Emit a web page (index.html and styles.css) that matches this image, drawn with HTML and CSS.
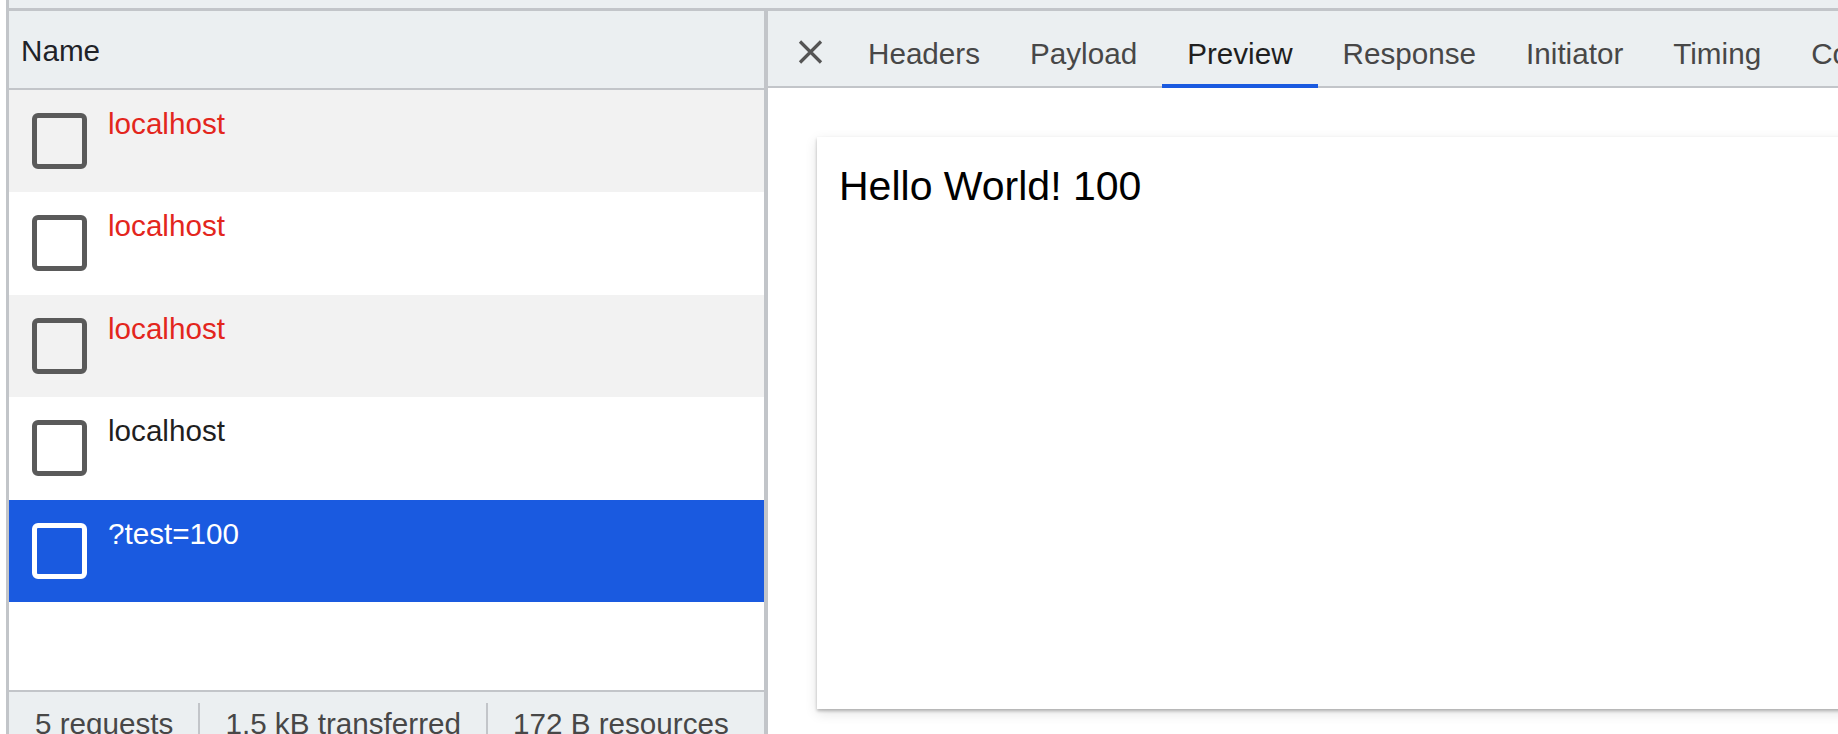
FILE: index.html
```html
<!DOCTYPE html>
<html>
<head>
<meta charset="utf-8">
<link rel="stylesheet" href="styles.css">
</head>
<body>
<div class="page">
  <div class="topband"></div>
  <div class="main">
    <section class="list">
      <div class="list-head">Name</div>
      <div class="rows">
        <div class="row alt err"><span class="doc-icon"></span><span class="row-name">localhost</span></div>
        <div class="row err"><span class="doc-icon"></span><span class="row-name">localhost</span></div>
        <div class="row alt err"><span class="doc-icon"></span><span class="row-name">localhost</span></div>
        <div class="row"><span class="doc-icon"></span><span class="row-name">localhost</span></div>
        <div class="row selected"><span class="doc-icon"></span><span class="row-name">?test=100</span></div>
      </div>
      <div class="footer">
        <span class="stat first">5 requests</span>
        <span class="sep"></span>
        <span class="stat">1.5 kB transferred</span>
        <span class="sep"></span>
        <span class="stat">172 B resources</span>
      </div>
    </section>
    <div class="divider"></div>
    <section class="detail">
      <nav class="tabs">
        <span class="close">
          <svg width="25" height="24" viewBox="0 0 25 24"><path d="M2 1.5 L23 22.5 M23 1.5 L2 22.5" stroke="#555" stroke-width="3.2" fill="none"/></svg>
        </span>
        <span class="tab">Headers</span>
        <span class="tab">Payload</span>
        <span class="tab active">Preview</span>
        <span class="tab">Response</span>
        <span class="tab">Initiator</span>
        <span class="tab">Timing</span>
        <span class="tab">Cookies</span>
      </nav>
      <div class="preview">
        <div class="card">Hello World! 100</div>
      </div>
    </section>
  </div>
</div>
</body>
</html>
```
FILE: styles.css
```css
html, body {
  margin: 0;
  padding: 0;
  background: #ffffff;
  height: 734px;
  overflow: hidden;
}
body {
  font-family: "Liberation Sans", Arial, sans-serif;
  font-size: 29.65px;
}
.page {
  margin-left: 6px;
  border-left: 3px solid #c2c5c9;
  height: 734px;
  display: flex;
  flex-direction: column;
}
.topband {
  height: 8px;
  background: #ebeff1;
  border-bottom: 3px solid #c2c5c9;
  flex-shrink: 0;
}
.main {
  flex: 1;
  display: flex;
  min-height: 0;
}
.list {
  width: 755px;
  flex-shrink: 0;
  display: flex;
  flex-direction: column;
}
.list-head {
  height: 75px;
  line-height: 75px;
  padding: 2px 0 0 12px;
  background: #ebeff1;
  border-bottom: 2px solid #c2c5c9;
  color: #1f2328;
  flex-shrink: 0;
}
.rows {
  flex: 1;
  background: #fff;
}
.row {
  height: 102.4px;
  display: flex;
  align-items: flex-start;
  color: #1f1f1f;
}
.row.alt { background: #f2f2f2; }
.row.err { color: #e3261d; }
.row.selected { background: #1a5ae0; color: #ffffff; }
.doc-icon {
  width: 55px;
  height: 56px;
  box-sizing: border-box;
  border: 5px solid #5a5a5a;
  border-radius: 6px;
  margin: 23px 0 0 23px;
  flex-shrink: 0;
}
.row.selected .doc-icon { border-color: #ffffff; }
.row-name {
  margin-left: 21px;
  padding-top: 17px;
}
.footer {
  height: 42px;
  border-top: 2px solid #c2c5c9;
  background: #ebeff1;
  display: flex;
  align-items: flex-start;
  overflow: hidden;
  color: #474747;
  flex-shrink: 0;
}
.stat {
  padding: 15px 25px 0;
  white-space: nowrap;
}
.stat.first { padding-left: 26px; }
.sep {
  width: 2px;
  height: 40px;
  margin-top: 11px;
  background: #c2c5c9;
  flex-shrink: 0;
}
.divider {
  width: 4px;
  background: #c2c5c9;
  flex-shrink: 0;
}
.detail {
  flex: 1;
  min-width: 0;
  display: flex;
  flex-direction: column;
  overflow: hidden;
}
.tabs {
  height: 77px;
  display: flex;
  background: #ebeff1;
  box-shadow: inset 0 -2px 0 #c2c5c9;
  flex-shrink: 0;
  white-space: nowrap;
}
.close {
  width: 25px;
  height: 24px;
  margin: 29px 20px 0 30px;
  flex-shrink: 0;
}
.close svg { display: block; }
.tab {
  height: 77px;
  box-sizing: border-box;
  padding: 9px 25px 0;
  line-height: 68px;
  color: #474747;
  flex-shrink: 0;
}
.tab.active {
  color: #1f1f1f;
  box-shadow: inset 0 -4px 0 #1a5ae0;
}
.preview {
  flex: 1;
  background: #ffffff;
  padding: 49px 0 0 49px;
  display: flex;
  align-items: flex-start;
}
.card {
  width: 1200px;
  height: 572px;
  flex-shrink: 0;
  box-sizing: border-box;
  padding: 26px 22px 0;
  font-size: 41px;
  color: #000;
  background: #fff;
  box-shadow: 0 2px 3px rgba(0,0,0,0.25), 0 4px 12px rgba(0,0,0,0.12);
}
```
